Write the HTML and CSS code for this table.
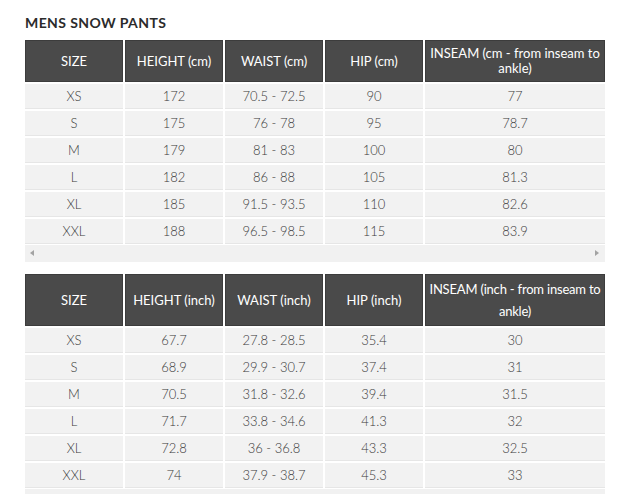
FILE: index.html
```html
<!DOCTYPE html>
<html>
<head>
<meta charset="utf-8">
<link rel="stylesheet" href="styles.css">
</head>
<body>
<div class="page">
  <h2 class="title">MENS SNOW PANTS</h2>
  <div class="chart">
    <table class="size-table">
      <colgroup><col class="c"><col class="c"><col class="c"><col class="c"><col class="c-wide"></colgroup>
      <thead>
        <tr><th>SIZE</th><th>HEIGHT (cm)</th><th>WAIST (cm)</th><th>HIP (cm)</th><th>INSEAM (cm - from inseam to ankle)</th></tr>
      </thead>
      <tbody>
        <tr><td>XS</td><td>172</td><td>70.5 - 72.5</td><td>90</td><td>77</td></tr>
        <tr><td>S</td><td>175</td><td>76 - 78</td><td>95</td><td>78.7</td></tr>
        <tr><td>M</td><td>179</td><td>81 - 83</td><td>100</td><td>80</td></tr>
        <tr><td>L</td><td>182</td><td>86 - 88</td><td>105</td><td>81.3</td></tr>
        <tr><td>XL</td><td>185</td><td>91.5 - 93.5</td><td>110</td><td>82.6</td></tr>
        <tr><td>XXL</td><td>188</td><td>96.5 - 98.5</td><td>115</td><td>83.9</td></tr>
      </tbody>
    </table>
    <div class="hscroll"><span class="arrow left"></span><span class="arrow right"></span></div>
  </div>
  <div class="chart second">
    <table class="size-table inch">
      <colgroup><col class="c"><col class="c"><col class="c"><col class="c"><col class="c-wide"></colgroup>
      <thead>
        <tr><th>SIZE</th><th>HEIGHT (inch)</th><th>WAIST (inch)</th><th>HIP (inch)</th><th>INSEAM (inch - from inseam to ankle)</th></tr>
      </thead>
      <tbody>
        <tr><td>XS</td><td>67.7</td><td>27.8 - 28.5</td><td>35.4</td><td>30</td></tr>
        <tr><td>S</td><td>68.9</td><td>29.9 - 30.7</td><td>37.4</td><td>31</td></tr>
        <tr><td>M</td><td>70.5</td><td>31.8 - 32.6</td><td>39.4</td><td>31.5</td></tr>
        <tr><td>L</td><td>71.7</td><td>33.8 - 34.6</td><td>41.3</td><td>32</td></tr>
        <tr><td>XL</td><td>72.8</td><td>36 - 36.8</td><td>43.3</td><td>32.5</td></tr>
        <tr><td>XXL</td><td>74</td><td>37.9 - 38.7</td><td>45.3</td><td>33</td></tr>
      </tbody>
    </table>
    <div class="hscroll"><span class="arrow left"></span><span class="arrow right"></span></div>
  </div>
</div>
</body>
</html>
```
FILE: styles.css
```css
html, body {
  margin: 0;
  padding: 0;
  background: #ffffff;
}
.page {
  padding: 13px 0 0 24px;
  font-family: "Lato", "Noto Sans", sans-serif;
  color: #333333;
}
.title {
  margin: 0 0 6px 1px;
  font-size: 14px;
  line-height: 20px;
  font-weight: 700;
  letter-spacing: 0.4px;
  color: #2b2b2b;
}
.chart {
  width: 582px;
}
.chart.second {
  margin-top: 11px;
}
.size-table {
  width: 582px;
  table-layout: fixed;
  border-collapse: separate;
  border-spacing: 0;
}
.size-table col.c { width: 100px; }
.size-table col.c-wide { width: 182px; }
.size-table th,
.size-table td {
  border: 1px solid #ffffff;
  text-align: center;
  padding: 0 2px;
  box-sizing: border-box;
}
.size-table th {
  background: #4a4a4a;
  color: #ffffff;
  font-weight: 400;
  font-size: 13px;
  line-height: 15px;
  height: 44px;
  box-shadow: inset 0 0 0 1px #3c3c3c;
}
.size-table.inch th {
  line-height: 22px;
  height: 54px;
}
.size-table.inch th:last-child {
  letter-spacing: -0.2px;
}
.size-table td {
  background: #f2f2f2;
  font-size: 13px;
  font-weight: 300;
  height: 27px;
  line-height: 15px;
  color: #3a3a3a;
  box-shadow: inset 0 -1px 0 #e6e6e6;
}
.hscroll {
  position: relative;
  height: 17px;
  background: #f1f1f1;
  margin-left: 1px;
  width: 580px;
}
.arrow {
  position: absolute;
  top: 5px;
  width: 0;
  height: 0;
  border-top: 3px solid transparent;
  border-bottom: 3px solid transparent;
}
.arrow.left {
  left: 5px;
  border-right: 4px solid #a3a3a3;
}
.arrow.right {
  right: 6px;
  border-left: 4px solid #a3a3a3;
}
```
